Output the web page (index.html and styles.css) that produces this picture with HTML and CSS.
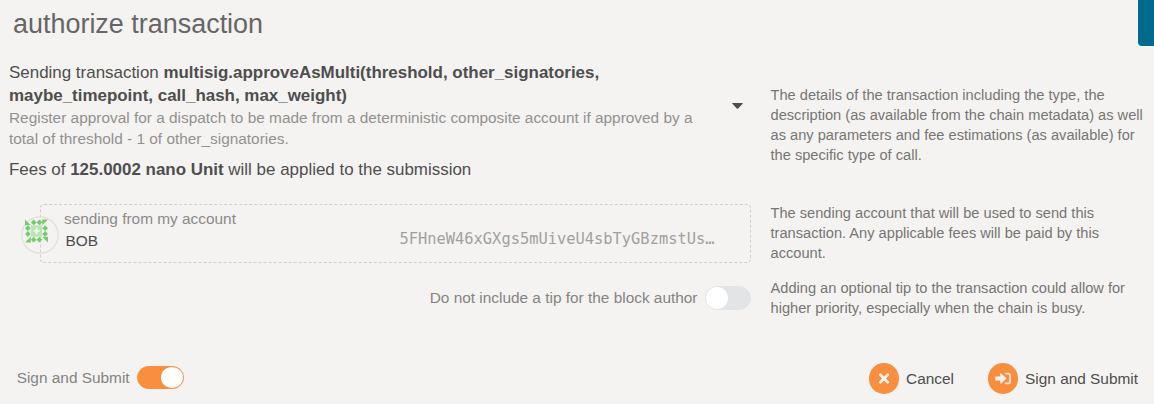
FILE: index.html
```html
<!DOCTYPE html>
<html lang="en">
<head>
<meta charset="utf-8">
<title>authorize transaction</title>
<link rel="stylesheet" href="styles.css">
</head>
<body>
<main class="modal">
  <h1 class="title">authorize transaction</h1>
  <span class="edge-tab"></span>
  <section class="columns details">
    <div class="expander">
      <div class="summary">
        <p class="call">Sending transaction <b>multisig.approveAsMulti(threshold, other_signatories,<br>maybe_timepoint, call_hash, max_weight)</b></p>
        <p class="meta">Register approval for a dispatch to be made from a deterministic composite account if approved by a<br>total of threshold - 1 of other_signatories.</p>
      </div>
      <svg class="caret" width="11" height="6" viewBox="0 0 11 6"><path d="M.7 0h9.6q1 0 .3.8L6.2 5.4q-.7.7-1.4 0L.4.8Q-.3 0 .7 0z"/></svg>
      <p class="fees">Fees of <b>125.0002 nano Unit</b> will be applied to the submission</p>
    </div>
    <p class="hint">The details of the transaction including the type, the<br>description (as available from the chain metadata) as well<br>as any parameters and fee estimations (as available) for<br>the specific type of call.</p>
  </section>
  <section class="columns sender">
    <div class="account">
      <svg class="identicon" width="38" height="38" viewBox="0 0 38 38">
        <circle class="ring" cx="19" cy="19" r="18.2"/>
        <g class="dark" transform="translate(4 3.5) scale(5.75)">
          <path d="M0 0L1 1H0zM4 0L3 1V0zM4 4L3 3H4zM0 4L1 3V4z"/>
          <path d="M1.5 0l.5.5-.5.5-.5-.5zM2.5 0l.5.5-.5.5-.5-.5zM1.5 3l.5.5-.5.5-.5-.5zM2.5 3l.5.5-.5.5-.5-.5zM.5 1l.5.5-.5.5-.5-.5zM.5 2l.5.5-.5.5-.5-.5zM3.5 1l.5.5-.5.5-.5-.5zM3.5 2l.5.5-.5.5-.5-.5z"/>
          <path class="light" d="M1 1h2v2H1z"/>
          <path class="star" d="M2 1.35l.2.45.45.2-.45.2-.2.45-.2-.45-.45-.2.45-.2z"/>
        </g>
      </svg>
      <span class="label">sending from my account</span>
      <div class="account-row"><span class="name">BOB</span><span class="address">5FHneW46xGXgs5mUiveU4sbTyGBzmstUs…</span></div>
    </div>
    <p class="hint">The sending account that will be used to send this<br>transaction. Any applicable fees will be paid by this<br>account.</p>
  </section>
  <section class="columns tip">
    <div class="toggle-row"><span>Do not include a tip for the block author</span><i class="toggle"></i></div>
    <p class="hint">Adding an optional tip to the transaction could allow for<br>higher priority, especially when the chain is busy.</p>
  </section>
  <footer class="actions">
    <div class="toggle-row"><span>Sign and Submit</span><i class="toggle on"></i></div>
    <div class="buttons">
      <div class="button"><svg width="30" height="31" viewBox="0 0 30 31"><rect class="disc" width="30" height="31" rx="15"/><path class="cross" d="M11.3 11.8l7.4 7.4M18.7 11.8l-7.4 7.4"/></svg><span>Cancel</span></div>
      <div class="button"><svg width="30" height="31" viewBox="0 0 30 31"><rect class="disc" width="30" height="31" rx="15"/><path class="arrow" d="M8 13.4h4.3v-2.5q0-1.2.9-.4l4.9 4.5q.5.5 0 1l-4.9 4.5q-.9.8-.9-.4v-2.5H8q-.7 0-.7-.7V14.1q0-.7.7-.7z"/><path class="door" d="M17.7 10.7h2.5q1.8 0 1.8 1.8v6q0 1.8-1.8 1.8h-2.5"/></svg><span>Sign and Submit</span></div>
    </div>
  </footer>
</main>
</body>
</html>
```
FILE: styles.css
```css
* { box-sizing: border-box; }
body { margin: 0; background: #f4f3f1; font: 15.4px/20px "Liberation Sans", Arial, sans-serif; color: #4e4e4e; }
h1, p { margin: 0; white-space: nowrap; }
.modal { position: relative; display: flex; flex-direction: column; width: 1154px; height: 404px; overflow: hidden; padding-left: 9px; }
.title { padding: 8px 0 0 4px; height: 61px; font-size: 26.95px; line-height: 32px; font-weight: 400; color: #666; }
.edge-tab { position: absolute; top: 0; right: 0; width: 16px; height: 46px; background: #006a8c; border-radius: 0 0 0 4px; }
.columns { display: grid; grid-template-columns: 742px 1fr; column-gap: 19.5px; }
.hint { font-size: 14.63px; line-height: 20px; color: #777673; }
.details { height: 142px; }
.details .hint { padding-top: 24px; }
.expander { display: grid; grid-template-columns: 1fr auto; align-content: start; align-items: center; padding-right: 8px; }
.call, .fees { font-size: 16.94px; line-height: 23px; }
.meta { line-height: 21px; color: #92918f; }
.caret { fill: #4e4e4e; margin-top: 2px; }
.fees { padding-top: 9px; }
.sender { height: 75px; }
.account { position: relative; height: 59px; margin: 1px 0 0 31px; padding: 4px 35.5px 0 23px; border: 1px dashed #d0cfcd; border-radius: 4px; color: #8b8a88; }
.identicon { position: absolute; left: -20px; top: 11px; }
.ring { fill: none; stroke: #deddda; stroke-width: 1.2; }
.dark { fill: #73cc69; }
.light { fill: #bae5b5; }
.star { fill: #eef7ec; }
.account-row { display: flex; justify-content: space-between; align-items: flex-start; padding-left: 1.5px; }
.name { color: #4e4e4e; padding-top: 2px; }
.address { font-family: "DejaVu Sans Mono", monospace; color: #a1a09f; }
.toggle-row { display: flex; align-items: center; gap: 7.5px; color: #858482; }
.toggle { width: 46px; height: 24px; border: 1px solid #e2e4e6; border-radius: 12px; background: #e2e4e6; }
.toggle::before { content: ""; display: block; width: 22px; height: 22px; border-radius: 50%; background: #fff; }
.toggle.on { width: 47px; height: 23px; background: #f98f3e; border-color: #f98f3e; }
.toggle.on::before { margin-left: auto; height: 21px; }
.tip { height: 85px; align-items: start; }
.tip .toggle-row { justify-content: flex-end; padding-top: 8px; }
.actions { display: flex; justify-content: space-between; height: 31px; padding: 0 16px 0 7.7px; }
.actions .toggle-row { height: 29px; }
.buttons { display: flex; gap: 34.3px; }
.button { display: flex; align-items: center; gap: 6.8px; }
.disc { fill: #f98f3e; }
.cross { stroke: #f5f2ef; stroke-width: 2.8; stroke-linecap: round; }
.arrow { fill: #f5f2ef; }
.door { fill: none; stroke: #f5e6d9; stroke-width: 1.8; stroke-linecap: round; }
```
